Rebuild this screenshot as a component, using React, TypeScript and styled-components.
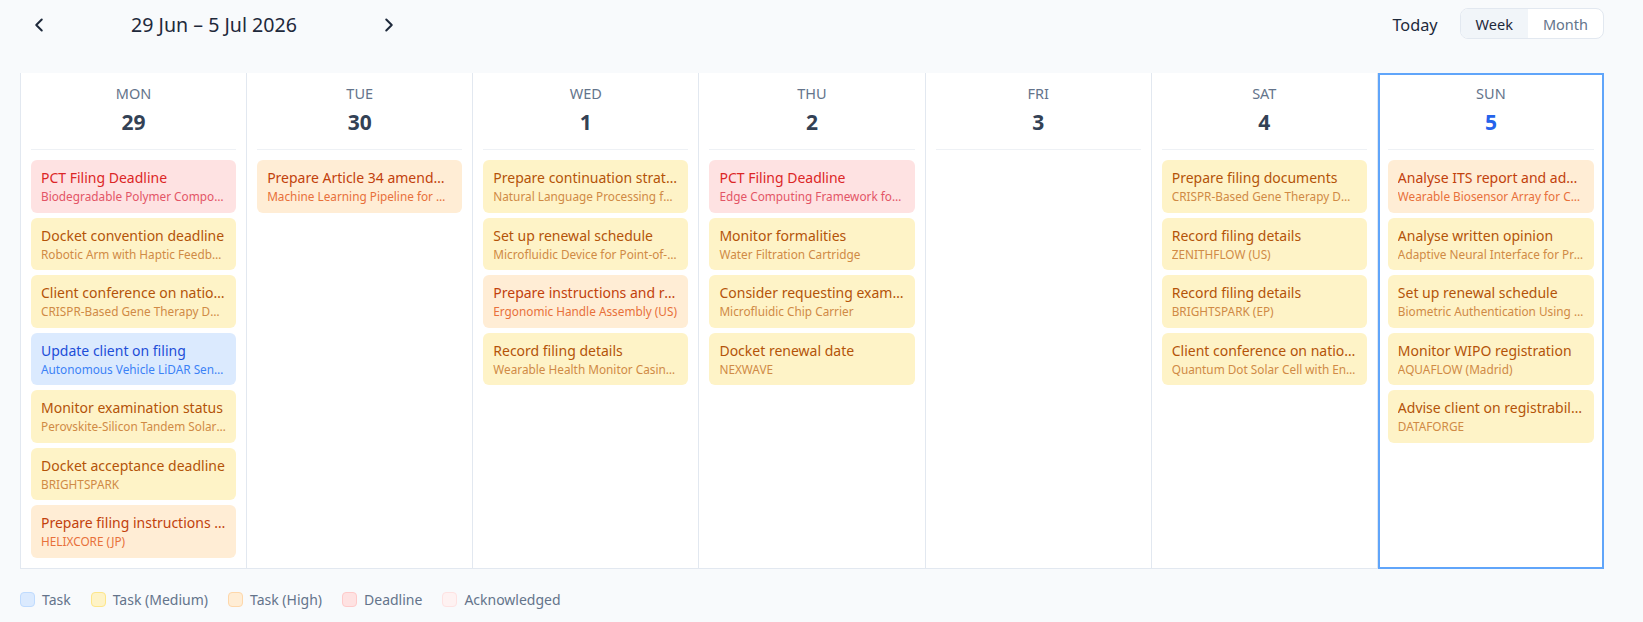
import React from 'react';
import styled, { createGlobalStyle, css } from 'styled-components';

type Kind = 'task' | 'medium' | 'high' | 'deadline' | 'ack';

interface CalEvent {
  kind: Kind;
  title: string;
  subtitle: string;
}

interface Day {
  name: string;
  date: number;
  today?: boolean;
  events: CalEvent[];
}

const palette: Record<Kind, { bg: string; border: string; title: string; sub: string }> = {
  task: { bg: '#dbeafe', border: '#bfdbfe', title: '#1d4ed8', sub: '#3b82f6' },
  medium: { bg: '#fef3c7', border: '#fde68a', title: '#b45309', sub: '#d08a45' },
  high: { bg: '#ffedd5', border: '#fed7aa', title: '#c2410c', sub: '#e8703a' },
  deadline: { bg: '#fee2e2', border: '#fecaca', title: '#dc2626', sub: '#e35566' },
  ack: { bg: '#fef2f2', border: '#fee2e2', title: '#ef4444', sub: '#f87171' },
};

const days: Day[] = [
  {
    name: 'MON',
    date: 29,
    events: [
      { kind: 'deadline', title: 'PCT Filing Deadline', subtitle: 'Biodegradable Polymer Composition for Packaging' },
      { kind: 'medium', title: 'Docket convention deadline', subtitle: 'Robotic Arm with Haptic Feedback Control' },
      { kind: 'medium', title: 'Client conference on national phase entry', subtitle: 'CRISPR-Based Gene Therapy Delivery System' },
      { kind: 'task', title: 'Update client on filing', subtitle: 'Autonomous Vehicle LiDAR Sensor Array' },
      { kind: 'medium', title: 'Monitor examination status', subtitle: 'Perovskite-Silicon Tandem Solar Cell Module' },
      { kind: 'medium', title: 'Docket acceptance deadline', subtitle: 'BRIGHTSPARK' },
      { kind: 'high', title: 'Prepare filing instructions for agent', subtitle: 'HELIXCORE (JP)' },
    ],
  },
  {
    name: 'TUE',
    date: 30,
    events: [
      { kind: 'high', title: 'Prepare Article 34 amendments', subtitle: 'Machine Learning Pipeline for Real-Time Analytics' },
    ],
  },
  {
    name: 'WED',
    date: 1,
    events: [
      { kind: 'medium', title: 'Prepare continuation strategy', subtitle: 'Natural Language Processing for Legal Documents' },
      { kind: 'medium', title: 'Set up renewal schedule', subtitle: 'Microfluidic Device for Point-of-Care Testing' },
      { kind: 'high', title: 'Prepare instructions and response', subtitle: 'Ergonomic Handle Assembly (US)' },
      { kind: 'medium', title: 'Record filing details', subtitle: 'Wearable Health Monitor Casing Design' },
    ],
  },
  {
    name: 'THU',
    date: 2,
    events: [
      { kind: 'deadline', title: 'PCT Filing Deadline', subtitle: 'Edge Computing Framework for IoT Devices' },
      { kind: 'medium', title: 'Monitor formalities', subtitle: 'Water Filtration Cartridge' },
      { kind: 'medium', title: 'Consider requesting examination', subtitle: 'Microfluidic Chip Carrier' },
      { kind: 'medium', title: 'Docket renewal date', subtitle: 'NEXWAVE' },
    ],
  },
  { name: 'FRI', date: 3, events: [] },
  {
    name: 'SAT',
    date: 4,
    events: [
      { kind: 'medium', title: 'Prepare filing documents', subtitle: 'CRISPR-Based Gene Therapy Delivery System' },
      { kind: 'medium', title: 'Record filing details', subtitle: 'ZENITHFLOW (US)' },
      { kind: 'medium', title: 'Record filing details', subtitle: 'BRIGHTSPARK (EP)' },
      { kind: 'medium', title: 'Client conference on national phase entry', subtitle: 'Quantum Dot Solar Cell with Enhanced Efficiency' },
    ],
  },
  {
    name: 'SUN',
    date: 5,
    today: true,
    events: [
      { kind: 'high', title: 'Analyse ITS report and advise client', subtitle: 'Wearable Biosensor Array for Continuous Monitoring' },
      { kind: 'medium', title: 'Analyse written opinion', subtitle: 'Adaptive Neural Interface for Prosthetics' },
      { kind: 'medium', title: 'Set up renewal schedule', subtitle: 'Biometric Authentication Using Vein Patterns' },
      { kind: 'medium', title: 'Monitor WIPO registration', subtitle: 'AQUAFLOW (Madrid)' },
      { kind: 'medium', title: 'Advise client on registrability', subtitle: 'DATAFORGE' },
    ],
  },
];

const legend: { kind: Kind; label: string }[] = [
  { kind: 'task', label: 'Task' },
  { kind: 'medium', label: 'Task (Medium)' },
  { kind: 'high', label: 'Task (High)' },
  { kind: 'deadline', label: 'Deadline' },
  { kind: 'ack', label: 'Acknowledged' },
];

const GlobalStyle = createGlobalStyle`
  html, body {
    margin: 0;
    padding: 0;
    background: #f8fafc;
  }
  body {
    font-family: 'Noto Sans', 'Open Sans', sans-serif;
    color: #1e293b;
  }
  * {
    box-sizing: border-box;
  }
`;

const Page = styled.div`
  padding: 8px 39px 0 20px;
`;

const Toolbar = styled.div`
  display: flex;
  align-items: center;
  justify-content: space-between;
  height: 31px;
`;

const Nav = styled.div`
  display: flex;
  align-items: center;
`;

const NavButton = styled.button`
  width: 38px;
  height: 31px;
  display: flex;
  align-items: center;
  justify-content: center;
  border: none;
  background: transparent;
  color: #1e293b;
  padding: 2px 0 0;
  cursor: pointer;
`;

const RangeTitle = styled.div`
  width: 312px;
  text-align: center;
  font-size: 19.6px;
  color: #1e293b;
  line-height: 26px;
  padding-top: 2px;
`;

const Actions = styled.div`
  display: flex;
  align-items: center;
  gap: 22px;
`;

const TodayButton = styled.button`
  border: none;
  background: transparent;
  font-family: inherit;
  font-size: 16.3px;
  color: #1e293b;
  padding: 3px 0 0;
  cursor: pointer;
`;

const ViewSwitch = styled.div`
  display: flex;
  height: 31px;
  border: 1px solid #e2e8f0;
  border-radius: 8px;
  overflow: hidden;
  background: #fff;
`;

const ViewOption = styled.button<{ $active?: boolean }>`
  border: none;
  font-family: inherit;
  font-size: 14.5px;
  padding: 0 15px;
  background: ${({ $active }) => ($active ? '#f1f5f9' : 'transparent')};
  color: ${({ $active }) => ($active ? '#1e293b' : '#64748b')};
  cursor: pointer;
`;

const WeekGrid = styled.div`
  margin-top: 34px;
  display: grid;
  grid-template-columns: repeat(7, minmax(0, 1fr));
  background: #fff;
  border-left: 1px solid #e2e8f0;
`;

const DayColumn = styled.div<{ $today?: boolean }>`
  min-width: 0;
  padding: 0 10px 10px;
  border-right: 1px solid #e2e8f0;
  border-bottom: 1px solid #e2e8f0;
  &:last-child {
    border-right: none;
  }
  ${({ $today }) =>
    $today &&
    css`
      outline: 2px solid #60a5fa;
      outline-offset: -2px;
    `}
`;

const DayHead = styled.div`
  text-align: center;
  padding: 10px 0 13px;
  border-bottom: 1px solid #eef1f5;
  margin-bottom: 10px;
`;

const DayName = styled.div`
  font-size: 14.5px;
  line-height: 20px;
  color: #64748b;
`;

const DayNumber = styled.div<{ $today?: boolean }>`
  margin-top: 5px;
  font-size: 21px;
  line-height: 28px;
  font-weight: 700;
  color: ${({ $today }) => ($today ? '#2563eb' : '#334155')};
`;

const EventList = styled.div`
  display: flex;
  flex-direction: column;
  gap: 5px;
`;

const EventCard = styled.div<{ $kind: Kind }>`
  padding: 7px 10px 7px;
  border-radius: 6px;
  background: ${({ $kind }) => palette[$kind].bg};
  min-width: 0;
`;

const EventTitle = styled.div<{ $kind: Kind }>`
  font-size: 14px;
  line-height: 21px;
  color: ${({ $kind }) => palette[$kind].title};
  white-space: nowrap;
  overflow: hidden;
  text-overflow: ellipsis;
`;

const EventSub = styled.div<{ $kind: Kind }>`
  font-size: 11.8px;
  line-height: 17.5px;
  color: ${({ $kind }) => palette[$kind].sub};
  white-space: nowrap;
  overflow: hidden;
  text-overflow: ellipsis;
`;

const Legend = styled.div`
  display: flex;
  align-items: center;
  gap: 20px;
  margin-top: 21px;
`;

const LegendItem = styled.div`
  display: flex;
  align-items: center;
  gap: 7px;
  font-size: 14px;
  line-height: 20px;
  color: #64748b;
`;

const Swatch = styled.span<{ $kind: Kind }>`
  width: 15px;
  height: 15px;
  border-radius: 4px;
  background: ${({ $kind }) => palette[$kind].bg};
  border: 1px solid ${({ $kind }) => palette[$kind].border};
`;

const Chevron: React.FC<{ dir: 'left' | 'right' }> = ({ dir }) => (
  <svg width="22" height="22" viewBox="0 0 24 24" fill="none" stroke="currentColor" strokeWidth="2.2" strokeLinecap="round" strokeLinejoin="round">
    {dir === 'left' ? <path d="M15 18l-6-6 6-6" /> : <path d="M9 18l6-6-6-6" />}
  </svg>
);

const App: React.FC = () => {
  return (
    <Page>
      <GlobalStyle />
      <Toolbar>
        <Nav>
          <NavButton aria-label="Previous week">
            <Chevron dir="left" />
          </NavButton>
          <RangeTitle>29 Jun – 5 Jul 2026</RangeTitle>
          <NavButton aria-label="Next week">
            <Chevron dir="right" />
          </NavButton>
        </Nav>
        <Actions>
          <TodayButton>Today</TodayButton>
          <ViewSwitch>
            <ViewOption $active>Week</ViewOption>
            <ViewOption>Month</ViewOption>
          </ViewSwitch>
        </Actions>
      </Toolbar>

      <WeekGrid>
        {days.map(day => (
          <DayColumn key={day.name} $today={day.today}>
            <DayHead>
              <DayName>{day.name}</DayName>
              <DayNumber $today={day.today}>{day.date}</DayNumber>
            </DayHead>
            <EventList>
              {day.events.map((ev, i) => (
                <EventCard key={i} $kind={ev.kind}>
                  <EventTitle $kind={ev.kind}>{ev.title}</EventTitle>
                  <EventSub $kind={ev.kind}>{ev.subtitle}</EventSub>
                </EventCard>
              ))}
            </EventList>
          </DayColumn>
        ))}
      </WeekGrid>

      <Legend>
        {legend.map(item => (
          <LegendItem key={item.kind}>
            <Swatch $kind={item.kind} />
            {item.label}
          </LegendItem>
        ))}
      </Legend>
    </Page>
  );
};

export default App;
